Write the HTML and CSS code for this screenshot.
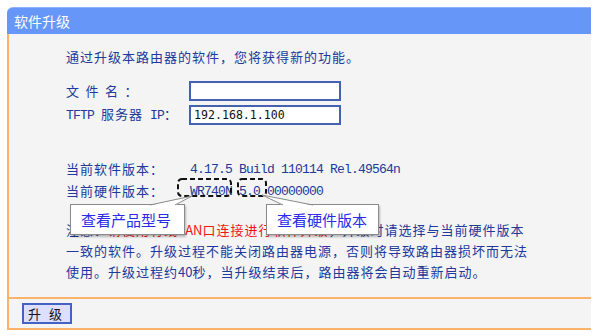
FILE: index.html
```html
<!DOCTYPE html>
<html lang="zh-CN">
<head>
    <meta charset="UTF-8">
    <link rel="stylesheet" href="styles.css">
    <title>软件升级</title>
</head>
<body>

    <div class="panel">
        <div class="panel-head">软件升级</div>

        <div class="panel-body">
            <p class="intro">通过升级本路由器的软件，您将获得新的功能。</p>

            <div class="form-grid">
                <span class="label spaced">文件名：</span>
                <input type="text" class="field">
                <span class="label"><span class="en">TFTP </span>服务器<span class="en"> IP</span>：</span>
                <input type="text" class="field" value="192.168.1.100">
            </div>

            <div class="info-grid">
                <span class="label">当前软件版本：</span>
                <span class="en">4.17.5 Build 110114 Rel.49564n</span>
                <span class="label">当前硬件版本：</span>
                <span class="en">WR740N 5.0 00000000</span>
            </div>

            <p class="note">
                注意：<span class="warn">请使用有线<span class="en-inline">LAN</span>口连接进行软件升级</span>，升级时请选择与当前硬件版本<br>
                一致的软件。升级过程不能关闭路由器电源，否则将导致路由器损坏而无法<br>
                使用。升级过程约<span class="en-inline">40</span>秒，当升级结束后，路由器将会自动重新启动。
            </p>
        </div>

        <div class="panel-foot">
            <button class="btn">升级</button>
        </div>

        <!-- подсказки поверх скриншота -->
        <div class="callout callout-model">查看产品型号</div>
        <div class="callout callout-hw">查看硬件版本</div>

        <svg class="marks" width="584" height="330" viewBox="0 0 584 330">
            <rect x="171" y="172" width="53" height="17" rx="4" fill="none" stroke="#111" stroke-width="2" stroke-dasharray="5 3"/>
            <rect x="231" y="172" width="28" height="17" rx="4" fill="none" stroke="#111" stroke-width="2" stroke-dasharray="5 3"/>

            <polygon points="143,198.5 185,189 168,198.5" fill="#fff"/>
            <polyline points="143,198 185,189 168,198" fill="none" stroke="#8a8a8a" stroke-width="1"/>

            <polygon points="276,198.5 255,188 306,198.5" fill="#fff"/>
            <polyline points="276,198 255,188 306,198" fill="none" stroke="#8a8a8a" stroke-width="1"/>
        </svg>
    </div>

</body>
</html>
```

FILE: styles.css
```css
body {
    margin: 0;
    padding: 0;
    background-color: #fff;
    font-family: "Noto Sans CJK SC", sans-serif;
}

.panel {
    position: relative;
    margin: 7px 0 0 7px;
    width: 584px;
}

.panel-head {
    height: 26px;
    border-top: 1px solid #8fb1fc;
    border-top-left-radius: 6px;
    background-color: #6596f8; /* синяя шапка */
    color: #fff;
    font-size: 14px;
    line-height: 26px;
    padding-left: 7px;
}

.panel-body {
    border-left: 2px solid #fbb36a;
    background-color: #f4f4f4;
    padding: 13px 0 15px 57px;
    color: #20399b;
    font-size: 13px;
    letter-spacing: 1px;
}

.intro {
    margin: 0;
    line-height: 20px;
}

.form-grid {
    margin-top: 14px;
    display: grid;
    grid-template-columns: 123px 152px;
    row-gap: 3px;
    align-items: center;
}

.info-grid {
    margin-top: 33px;
    display: grid;
    grid-template-columns: 124px auto;
    grid-auto-rows: 20px;
    row-gap: 2px;
    align-items: center;
}

.label {
    line-height: 20px;
    white-space: nowrap;
}

.spaced {
    letter-spacing: 6.5px;
}

.en {
    font-family: "Liberation Mono", monospace;
    font-size: 13px;
    letter-spacing: -0.8px;
    white-space: pre;
}

.en-inline {
    letter-spacing: 0;
}

.field {
    box-sizing: border-box;
    width: 152px;
    height: 20px;
    margin: 0;
    padding: 0 0 0 3px;
    border: 2px solid #4462b4;
    background-color: #fff;
    font-family: "DejaVu Sans Mono", monospace;
    font-size: 11.6px;
    color: #111;
}

.note {
    margin: 18px 0 0 0;
    line-height: 21px;
    white-space: nowrap;
}

.warn {
    color: #f01414;
}

.panel-foot {
    border-top: 2px solid #fbb36a;
    border-bottom: 2px solid #fbb36a;
    border-left: 2px solid #fbb36a;
    background-color: #f4f4f4;
    padding: 4px 0 4px 13px;
    line-height: 0;
}

.btn {
    box-sizing: border-box;
    width: 50px;
    height: 21px;
    margin: 0;
    padding: 0 0 0 4px;
    text-align: left;
    white-space: nowrap;
    overflow: hidden;
    border: 2px solid #4462c4;
    background-color: #dcdffd;
    font-family: "Noto Sans CJK SC", sans-serif;
    font-size: 13px;
    letter-spacing: 8px;
    line-height: 17px;
    color: #111;
}

.callout {
    position: absolute;
    box-sizing: border-box;
    height: 31px;
    border: 1px solid #8a8a8a;
    background-color: #fff;
    box-shadow: 1px 2px 2px rgba(0, 0, 0, 0.25);
    color: #2a2ae8;
    font-size: 15px;
    line-height: 29px;
    padding-left: 10px;
}

.callout-model {
    left: 63px;
    top: 197px;
    width: 115px;
}

.callout-hw {
    left: 259px;
    top: 197px;
    width: 113px;
}

.marks {
    position: absolute;
    left: 0;
    top: 0;
    pointer-events: none;
}
```
